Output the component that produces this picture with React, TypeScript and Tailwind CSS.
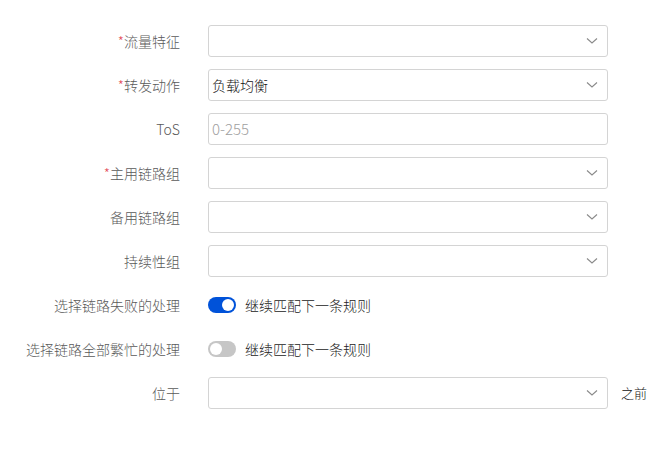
import React from "react";

const Chevron = () => (
  <svg width="12" height="8" viewBox="0 0 12 8" fill="none" className="shrink-0">
    <path d="M1 1.5 L6 6 L11 1.5" stroke="#8a8a8a" strokeWidth="1.1" />
  </svg>
);

const Label = ({ text, required }: { text: string; required?: boolean }) => (
  <div className="w-[180px] mr-[28px] text-right text-[14px] font-light text-[#5a5a5a] leading-none whitespace-nowrap">
    {required && <span className="text-[#e34d59]">*</span>}
    {text}
  </div>
);

const Select = ({ value }: { value?: string }) => (
  <div className="w-[400px] h-8 border border-[#d4d4d4] rounded-[3px] flex items-center justify-between pl-[3px] pr-[9px] bg-white">
    <span className="text-[14px] font-light text-[#111]">{value ?? ""}</span>
    <Chevron />
  </div>
);

const Toggle = ({ on }: { on: boolean }) => (
  <div
    className={`w-[28px] h-4 rounded-full flex items-center px-[2px] ${
      on ? "bg-[#0052d9] justify-end" : "bg-[#c6c6c6] justify-start"
    }`}
  >
    <div className="w-3 h-3 rounded-full bg-white" />
  </div>
);

export default function App() {
  return (
    <div
      className="w-[669px] h-[455px] bg-white pt-[25px] flex flex-col gap-3"
      style={{ fontFamily: '"Noto Sans CJK SC", "Noto Sans", sans-serif' }}
    >
      <div className="h-8 flex items-center">
        <Label text="流量特征" required />
        <Select />
      </div>
      <div className="h-8 flex items-center">
        <Label text="转发动作" required />
        <Select value="负载均衡" />
      </div>
      <div className="h-8 flex items-center">
        <Label text="ToS" />
        <div className="w-[400px] h-8 border border-[#d4d4d4] rounded-[3px] flex items-center pl-[3px]">
          <span className="text-[15px] font-light text-[#a0a0a0]">0-255</span>
        </div>
      </div>
      <div className="h-8 flex items-center">
        <Label text="主用链路组" required />
        <Select />
      </div>
      <div className="h-8 flex items-center">
        <Label text="备用链路组" />
        <Select />
      </div>
      <div className="h-8 flex items-center">
        <Label text="持续性组" />
        <Select />
      </div>
      <div className="h-8 flex items-center">
        <Label text="选择链路失败的处理" />
        <Toggle on />
        <span className="ml-[9px] text-[14px] font-light text-[#222]">继续匹配下一条规则</span>
      </div>
      <div className="h-8 flex items-center">
        <Label text="选择链路全部繁忙的处理" />
        <Toggle on={false} />
        <span className="ml-[9px] text-[14px] font-light text-[#222]">继续匹配下一条规则</span>
      </div>
      <div className="h-8 flex items-center">
        <Label text="位于" />
        <Select />
        <span className="ml-[13px] text-[13px] font-light text-[#111]">之前</span>
      </div>
    </div>
  );
}
